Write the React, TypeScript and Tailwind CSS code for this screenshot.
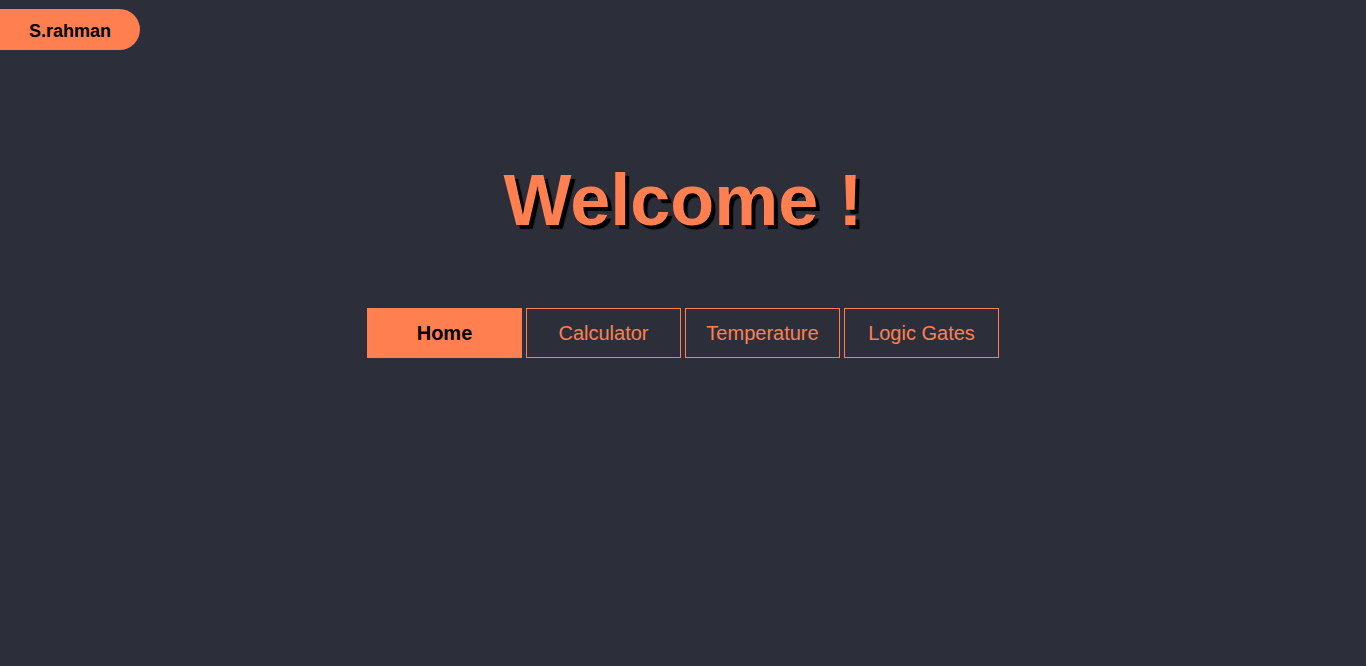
export default function App() {
  const links = ["Calculator", "Temperature", "Logic Gates"];

  return (
    <div className="min-h-[666px] w-full bg-[#2c2f3a] font-['Liberation_Sans',Arial,sans-serif]">
      {/* name pill */}
      <div className="pt-[9px]">
        <div className="flex h-[41px] w-[140px] items-center justify-center rounded-r-full bg-[#ff7f50] pt-[3px] text-[18px] font-bold text-black">
          S.rahman
        </div>
      </div>

      <h1 className="mt-[114px] h-[72px] text-center text-[72px] font-bold leading-none text-[#ff7f50] [text-shadow:4px_4px_1px_#000]">
        Welcome !
      </h1>

      <nav className="mt-[72px] flex justify-center gap-[4px]">
        <button className="h-[50px] w-[155px] bg-[#ff7f50] text-[20px] font-bold text-black">
          Home
        </button>
        {links.map((label) => (
          <button
            key={label}
            className="h-[50px] w-[155px] border border-[#ff7f50] text-[20px] text-[#ff7f50]"
          >
            {label}
          </button>
        ))}
      </nav>
    </div>
  );
}
